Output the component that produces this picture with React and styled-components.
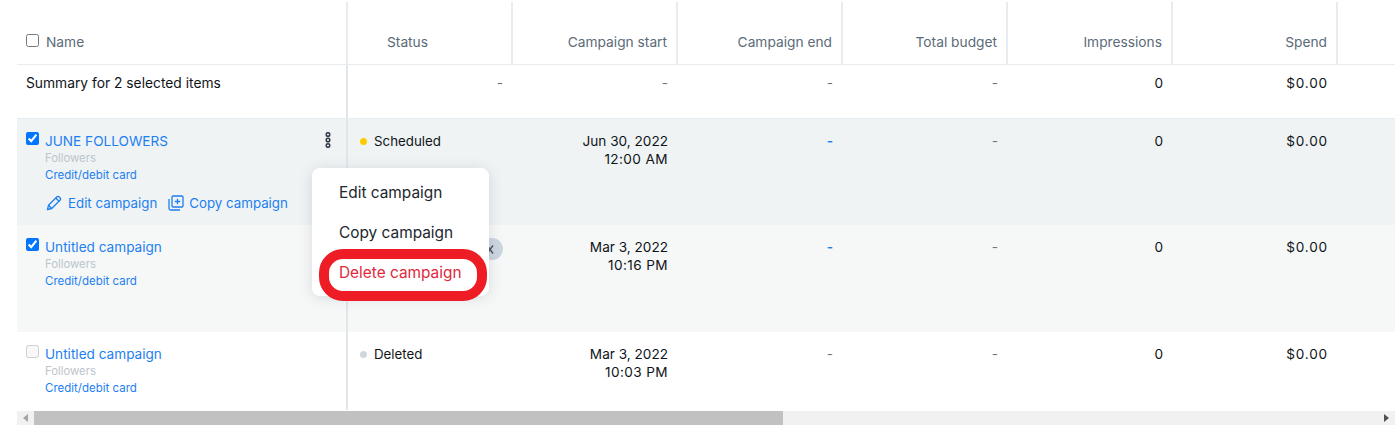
import React from "react";
import styled, { createGlobalStyle } from "styled-components";

const Global = createGlobalStyle`
  html, body { margin: 0; padding: 0; background: #fff; }
  body { font-family: "Inter", "Noto Sans", sans-serif; font-size: 14px; color: #0f1419; overflow: hidden; }
`;

const columns = "331px repeat(6, 165px) 57px";

const Page = styled.div`
  position: relative;
  width: 1395px;
  height: 425px;
  overflow: hidden;
  padding: 2px 0 0 17px;
  box-sizing: border-box;
  display: flex;
  flex-direction: column;
`;

const Table = styled.div`
  flex: 1;
  display: flex;
  flex-direction: column;
  min-height: 0;
`;

const Header = styled.div`
  display: grid;
  grid-template-columns: ${columns};
  height: 62px;
  border-bottom: 1px solid #e6ecf0;
`;

const HeadCell = styled.div`
  display: flex;
  align-items: center;
  justify-content: ${(p) => (p.$left ? "flex-start" : "flex-end")};
  gap: 7px;
  padding: 17px 9px 0 ${(p) => p.$pl || 9}px;
  border-right: 2px solid #e6ecf0;
  color: #5b6b78;
  font-size: 13.75px;
  font-weight: 400;
  &:last-child { border-right: 0; }
`;

const HeadCheck = styled.input.attrs({ type: "checkbox" })`
  margin: -3px 0 0;
  width: 13px;
  height: 13px;
  flex: none;
`;

const Row = styled.div`
  display: grid;
  grid-template-columns: ${columns};
  height: ${(p) => p.$h}px;
  background: ${(p) => p.$bg || "#fff"};
  box-sizing: border-box;
  border-bottom: ${(p) => (p.$line ? "1px solid #e6ecf0" : "0")};
`;

const NameCell = styled.div`
  position: relative;
  display: flex;
  gap: 6px;
  padding: 13px 0 0 9px;
  border-right: 2px solid #e1e6ea;
  box-sizing: border-box;
`;

const SummaryLabel = styled.div`
  padding: 10px 0 0 9px;
  border-right: 2px solid #e1e6ea;
  font-size: 13.8px;
  line-height: 16px;
  color: #0f1419;
`;

const Check = styled.input.attrs({ type: "checkbox" })`
  margin: 0;
  width: 13px;
  height: 13px;
  flex: none;
  accent-color: #0075ff;
`;

const NameStack = styled.div`
  display: flex;
  flex-direction: column;
  min-width: 0;
`;

const CampaignLink = styled.a`
  color: #1d7ff0;
  font-size: 13.6px;
  line-height: 18px;
`;

const Objective = styled.span`
  color: #bcc5cc;
  font-size: 11.3px;
  line-height: 17px;
`;

const PayLink = styled.a`
  color: #1d7ff0;
  font-size: 11.5px;
  line-height: 17px;
`;

const Actions = styled.div`
  display: flex;
  align-items: center;
  margin: 10px 0 0 1px;
  gap: 11px;
`;

const Action = styled.a`
  display: flex;
  align-items: center;
  gap: ${(p) => p.$gap}px;
  color: #1d7ff0;
  font-size: 13.3px;
  line-height: 18px;
`;

const Kebab = styled.svg`
  position: absolute;
  right: 15px;
  top: 13px;
`;

const StatusCell = styled.div`
  display: flex;
  align-items: flex-start;
  gap: 7px;
  padding: 13px 0 0 12px;
  font-size: 13.3px;
  line-height: 18px;
`;

const Dot = styled.span`
  width: 7px;
  height: 7px;
  border-radius: 50%;
  margin-top: 6px;
  background: ${(p) => p.$c};
`;

const DataCell = styled.div`
  padding: ${(p) => (p.$summary ? 9 : 13)}px 10px 0 0;
  text-align: right;
  font-size: 13.6px;
  line-height: 18px;
  color: ${(p) => p.$c || "#0f1419"};
`;

const Metric = styled.span`
  letter-spacing: ${(p) => p.$spacing || 0}px;
`;

const Dash = styled.span`
  font-weight: ${(p) => (p.$strong ? 600 : 400)};
`;

const Scrollbar = styled.div`
  height: 14px;
  margin-top: 1px;
  background: #f1f1f1;
  display: flex;
  align-items: center;
  justify-content: space-between;
  flex: none;
`;

const ScrollEnd = styled.div`
  width: 17px;
  height: 14px;
  display: flex;
  align-items: center;
  justify-content: center;
  flex: none;
`;

const Thumb = styled.div`
  width: 749px;
  height: 14px;
  background: #c1c1c1;
  margin-right: auto;
`;

const Menu = styled.div`
  position: absolute;
  left: 312px;
  top: 168px;
  width: 177px;
  height: 128px;
  background: #fff;
  border-radius: 8px;
  box-shadow: 0 2px 14px rgba(60, 70, 80, 0.16);
  padding-top: 5px;
  box-sizing: border-box;
  display: flex;
  flex-direction: column;
`;

const MenuItem = styled.div`
  height: 40px;
  line-height: 40px;
  padding-left: 27px;
  font-size: 15.4px;
  color: ${(p) => p.$c || "#20272d"};
`;

const Badge = styled.div`
  position: absolute;
  left: 481px;
  top: 238px;
  width: 22px;
  height: 22px;
  border-radius: 50%;
  background: #ccd6e0;
  display: flex;
  align-items: center;
  justify-content: center;
`;

const BadgeX = styled.svg`
  margin-right: 4px;
`;

const Highlight = styled.div`
  position: absolute;
  left: 319px;
  top: 249px;
  width: 168px;
  height: 52px;
  box-sizing: border-box;
  border: 10px solid #ee1c25;
  border-radius: 24px;
`;

const rows = [
  { name: "JUNE FOLLOWERS", h: 106, bg: "#eff3f4", checked: true, actions: true, status: "Scheduled", dot: "#ffcc00", start: ["Jun 30, 2022", "12:00 AM"], kebab: true, endColor: "#1d7ff0", strong: true },
  { name: "Untitled campaign", h: 107, bg: "#f6f8f8", checked: true, status: "", dot: "", start: ["Mar 3, 2022", "10:16 PM"], endColor: "#1d7ff0", strong: true },
  { name: "Untitled campaign", h: 78, checked: false, disabled: true, status: "Deleted", dot: "#ced6de", start: ["Mar 3, 2022", "10:03 PM"], endColor: "#6b7780" },
];

const Pencil = () => (
  <svg width="16" height="16" viewBox="0 0 16 16" fill="none" stroke="#1d7ff0" strokeWidth="1.3" strokeLinejoin="round">
    <path d="M1.5 14.5l1-4.2L11 1.8a1.4 1.4 0 0 1 2 0l1.2 1.2a1.4 1.4 0 0 1 0 2L5.700 13.500z" />
    <path d="M9.800 3l3.200 3.200M2.500 10.300l3.200 3.200" />
  </svg>
);

const CopyIcon = () => (
  <svg width="16" height="16" viewBox="0 0 16 16" fill="none" stroke="#1d7ff0" strokeWidth="1.3" strokeLinejoin="round">
    <rect x="4" y="1" width="11" height="11" rx="1.200" />
    <path d="M1 4v9.500a1.500 1.500 0 0 0 1.500 1.500H12M9.500 3.800v5.400M6.800 6.500h5.400" />
  </svg>
);

const KebabIcon = () => (
  <Kebab width="6" height="16" viewBox="0 0 6 16" fill="none" stroke="#2f3a44" strokeWidth="1.500">
    <circle cx="3" cy="2.500" r="1.800" />
    <circle cx="3" cy="8" r="1.800" />
    <circle cx="3" cy="13.500" r="1.800" />
  </Kebab>
);

const ArrowLeft = () => (
  <svg width="5" height="8" viewBox="0 0 5 8"><path d="M5 0v8L0 4z" fill="#a3a3a3" /></svg>
);
const ArrowRight = () => (
  <svg width="5" height="8" viewBox="0 0 5 8"><path d="M0 0v8l5-4z" fill="#505050" /></svg>
);

export default function App() {
  return (
    <Page>
      <Global />
      <Table>
        <Header>
          <HeadCell $left>
            <HeadCheck aria-label="Select all" />
            <span>Name</span>
          </HeadCell>
          <HeadCell $left $pl={39}>Status</HeadCell>
          <HeadCell>Campaign start</HeadCell>
          <HeadCell>Campaign end</HeadCell>
          <HeadCell>Total budget</HeadCell>
          <HeadCell>Impressions</HeadCell>
          <HeadCell>Spend</HeadCell>
          <HeadCell />
        </Header>
        <Row $h={54} $line>
          <SummaryLabel>Summary for 2 selected items</SummaryLabel>
          <DataCell $summary $c="#6b7780">-</DataCell>
          <DataCell $summary $c="#6b7780">-</DataCell>
          <DataCell $summary $c="#6b7780">-</DataCell>
          <DataCell $summary $c="#6b7780">-</DataCell>
          <DataCell $summary>0</DataCell>
          <DataCell $summary><Metric $spacing={0.8}>$0.00</Metric></DataCell>
        </Row>
        {rows.map((r, i) => (
          <Row key={i} $h={r.h} $bg={r.bg}>
            <NameCell>
              <Check defaultChecked={r.checked} disabled={r.disabled} aria-label={r.name} />
              <NameStack>
                <CampaignLink>{r.name}</CampaignLink>
                <Objective>Followers</Objective>
                <PayLink>Credit/debit card</PayLink>
                {r.actions && (
                  <Actions>
                    <Action $gap={6}><Pencil />Edit campaign</Action>
                    <Action $gap={5}><CopyIcon />Copy campaign</Action>
                  </Actions>
                )}
              </NameStack>
              {r.kebab && <KebabIcon />}
            </NameCell>
            <StatusCell>
              {r.status && <Dot $c={r.dot} />}
              {r.status}
            </StatusCell>
            <DataCell>{r.start[0]}<br /><Metric $spacing={0.4}>{r.start[1]}</Metric></DataCell>
            <DataCell $c={r.endColor}><Dash $strong={r.strong}>-</Dash></DataCell>
            <DataCell $c="#6b7780">-</DataCell>
            <DataCell>0</DataCell>
            <DataCell><Metric $spacing={0.8}>$0.00</Metric></DataCell>
          </Row>
        ))}
      </Table>
      <Scrollbar>
        <ScrollEnd><ArrowLeft /></ScrollEnd>
        <Thumb />
        <ScrollEnd><ArrowRight /></ScrollEnd>
      </Scrollbar>
      <Badge>
        <BadgeX width="8" height="9" viewBox="0 0 8 9" fill="none" stroke="#4a5a68" strokeWidth="1.500"><path d="M1 .5l6 8M7 .5l-6 8" /></BadgeX>
      </Badge>
      <Menu>
        <MenuItem>Edit campaign</MenuItem>
        <MenuItem>Copy campaign</MenuItem>
        <MenuItem $c="#e0283c">Delete campaign</MenuItem>
      </Menu>
      <Highlight />
    </Page>
  );
}
